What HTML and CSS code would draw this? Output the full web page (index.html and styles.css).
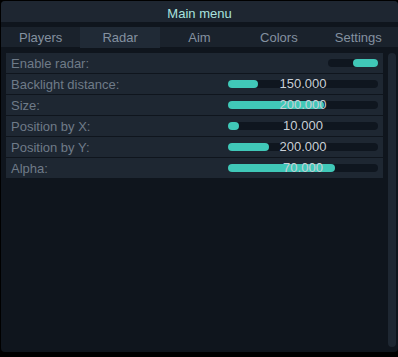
FILE: index.html
```html
<!DOCTYPE html>
<html lang="en">
<head>
    <meta charset="UTF-8">
    <title>Main menu</title>
    <link rel="stylesheet" href="styles.css">
</head>
<body>
    <div class="window">
        <div class="titlebar">Main menu</div>

        <div class="tabs">
            <div class="tab">Players</div>
            <div class="tab active">Radar</div>
            <div class="tab">Aim</div>
            <div class="tab">Colors</div>
            <div class="tab">Settings</div>
        </div>

        <div class="content">
            <div class="rows">
                <div class="row">
                    <span class="label">Enable radar:</span>
                    <div class="toggle on"><div class="knob"></div></div>
                </div>
                <div class="row">
                    <span class="label">Backlight distance:</span>
                    <div class="slider">
                        <div class="fill" style="width: 30px"></div>
                        <span class="value">150.000</span>
                    </div>
                </div>
                <div class="row">
                    <span class="label">Size:</span>
                    <div class="slider">
                        <div class="fill" style="width: 96px"></div>
                        <span class="value">200.000</span>
                    </div>
                </div>
                <div class="row">
                    <span class="label">Position by X:</span>
                    <div class="slider">
                        <div class="fill" style="width: 11px"></div>
                        <span class="value">10.000</span>
                    </div>
                </div>
                <div class="row">
                    <span class="label">Position by Y:</span>
                    <div class="slider">
                        <div class="fill" style="width: 41px"></div>
                        <span class="value">200.000</span>
                    </div>
                </div>
                <div class="row">
                    <span class="label">Alpha:</span>
                    <div class="slider">
                        <div class="fill" style="width: 107px"></div>
                        <span class="value">70.000</span>
                    </div>
                </div>
            </div>
            <div class="scrollbar"></div>
        </div>
    </div>
</body>
</html>
```

FILE: styles.css
```css
body {
    margin: 0;
    background: #000;
    font-family: "Liberation Sans", Arial, sans-serif;
    font-size: 13px;
}
.window {
    margin: 1px 0 0 1px;
    width: 397px;
    height: 351px;
    border-radius: 4px;
    background: #0f151d;
    overflow: hidden;
    display: flex;
    flex-direction: column;
}
.titlebar {
    height: 21px;
    line-height: 25px;
    background: #1e2631;
    color: #a9e2df;
    text-align: center;
}
.tabs {
    margin-top: 5px;
    height: 20px;
    background: #1a222c;
    display: grid;
    grid-template-columns: repeat(5, 1fr);
}
.tab {
    line-height: 21px;
    text-align: center;
    color: #8491a0;
}
.tab.active {
    background: #202a36;
}
.content {
    display: flex;
    padding: 6px 0 0 5px;
    gap: 5px;
}
.rows {
    width: 377px;
    display: flex;
    flex-direction: column;
    gap: 1px;
}
.row {
    height: 20px;
    background: #1e2732;
    display: flex;
    align-items: center;
    padding: 0 5px;
}
.label {
    flex: 1;
    color: #6f7b88;
}
.slider {
    position: relative;
    width: 150px;
    height: 8px;
    border-radius: 4px;
    background: #0f161f;
}
.slider .fill {
    height: 8px;
    min-width: 8px;
    border-radius: 4px;
    background: #40c8b8;
}
.slider .value {
    position: absolute;
    left: 0;
    right: 0;
    top: -4px;
    line-height: 16px;
    text-align: center;
    color: #c9cfd6;
}
.toggle {
    width: 50px;
    height: 8px;
    border-radius: 4px;
    background: #0f161f;
    display: flex;
    justify-content: flex-end;
}
.toggle .knob {
    width: 25px;
    height: 8px;
    border-radius: 4px;
    background: #40c8b8;
}
.scrollbar {
    width: 8px;
    height: 294px;
    border-radius: 4px;
    background: #1e2732;
}
```
